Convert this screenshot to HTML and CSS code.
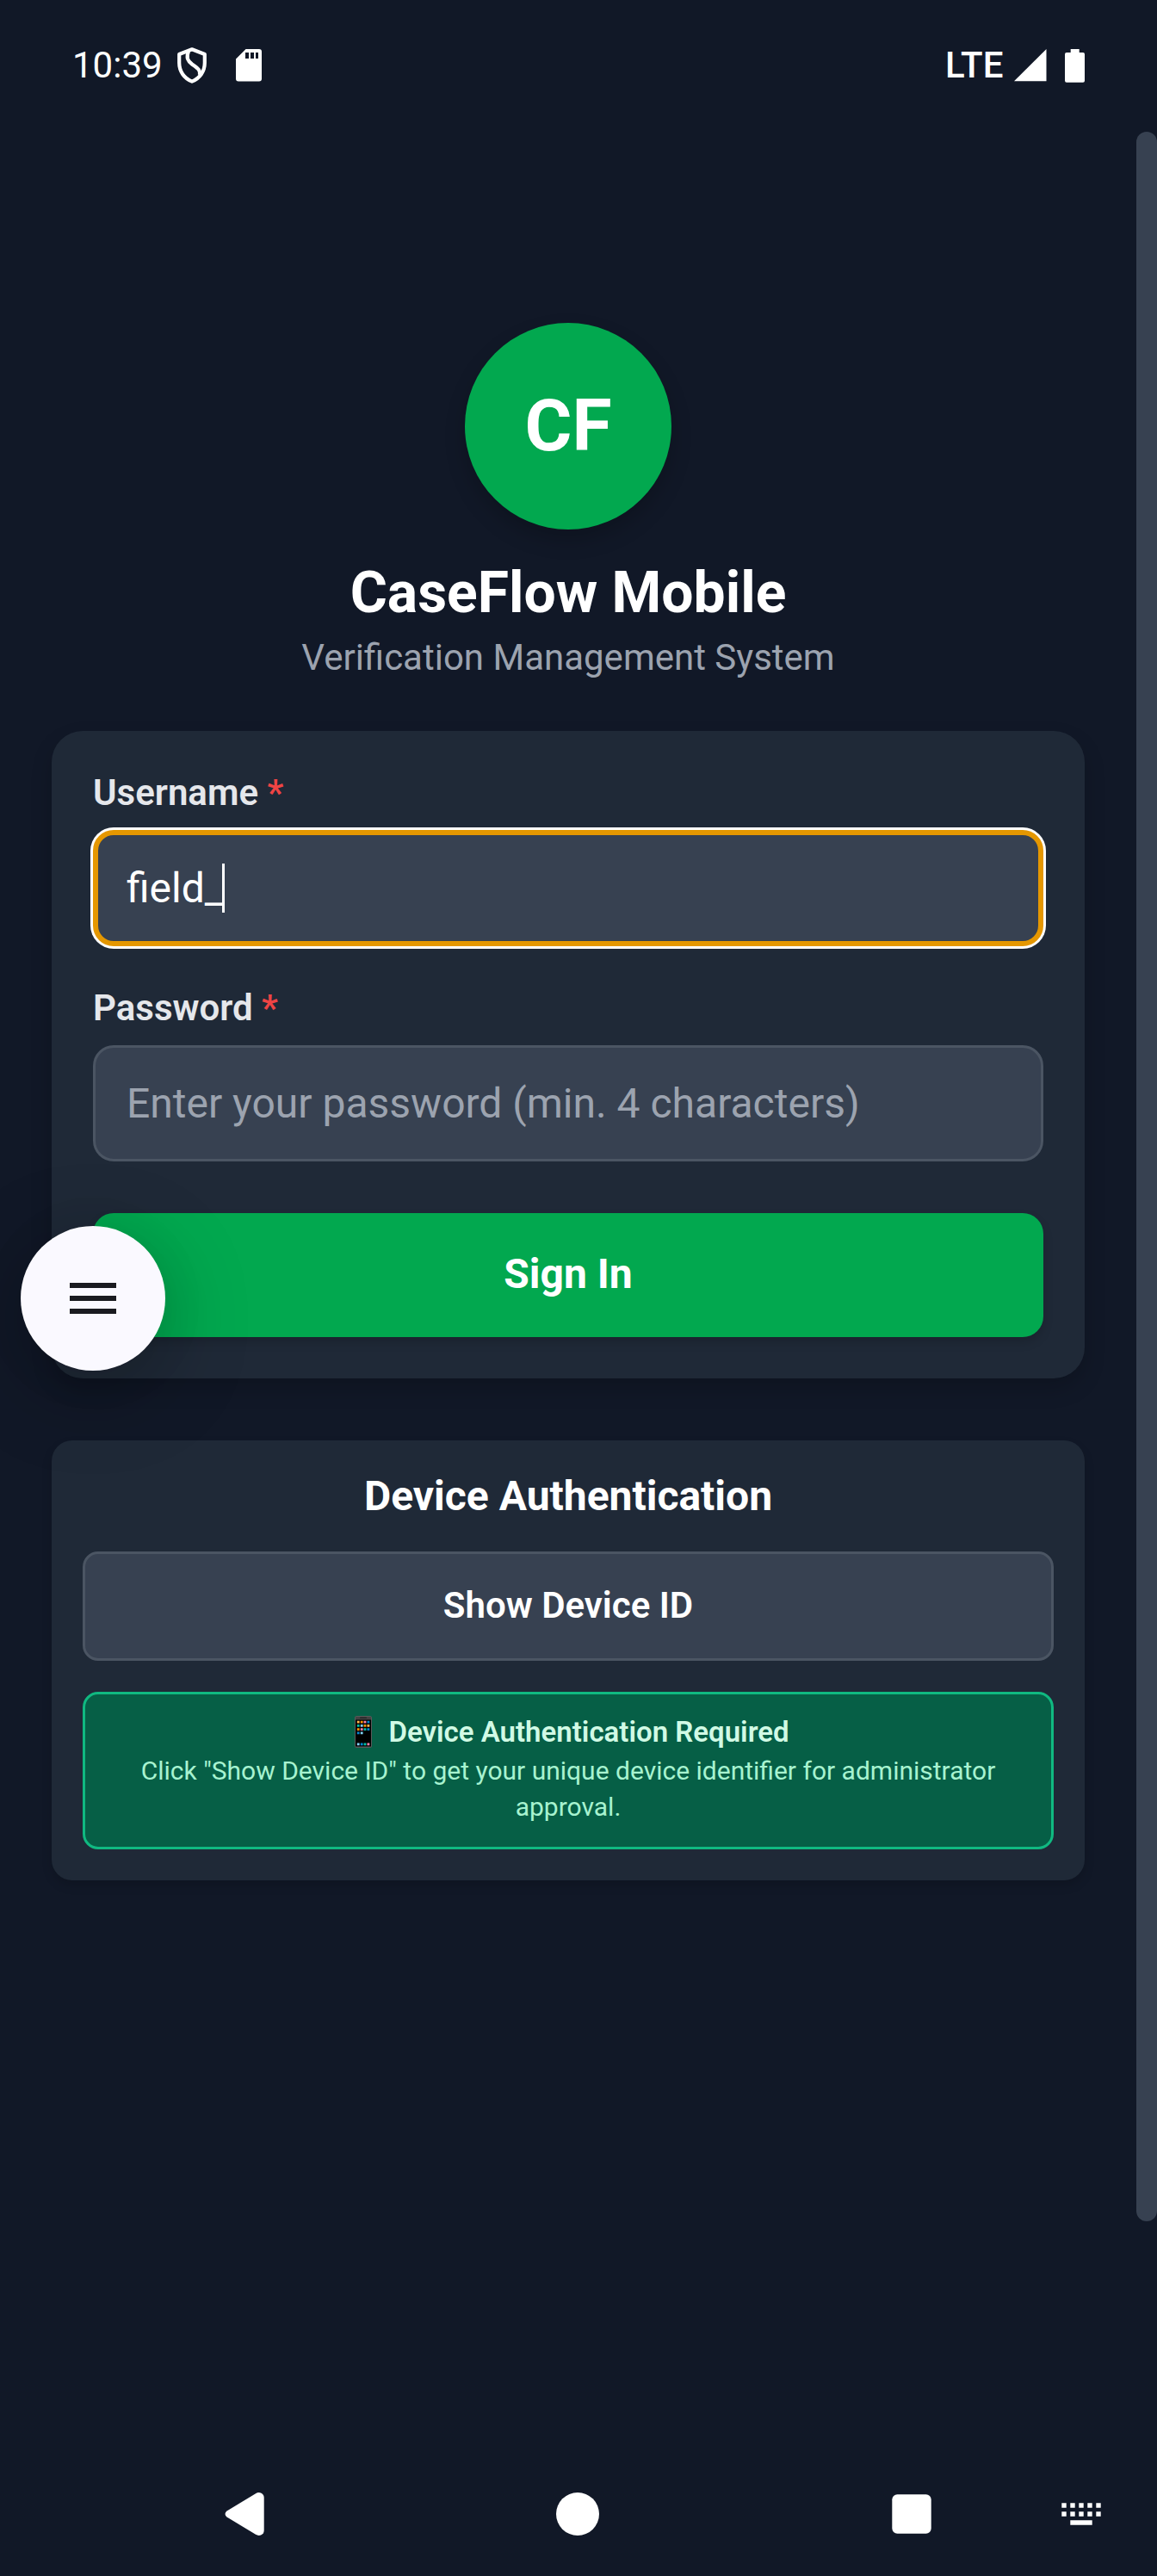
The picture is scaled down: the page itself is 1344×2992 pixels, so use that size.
FILE: index.html
```html
<!DOCTYPE html>
<html lang="en">
<head>
<meta charset="utf-8">
<title>CaseFlow Mobile</title>
<link rel="stylesheet" href="styles.css">
</head>
<body>
<div class="screen">
  <header class="status-bar">
    <div class="status-left">
      <span class="clock">10:39</span>
      <svg class="icon-shield" viewBox="0 0 34 42" width="34" height="42" fill="none" stroke="#fff" stroke-width="4.2" stroke-linejoin="round">
        <path d="M17 2.300 31.800 8V18C31.800 28 26 36 17 39.600 8 36 2.200 28 2.200 18V8Z"/>
        <path d="M13 4.500C10 12 12 15.500 17 19.500 24 24.500 26.800 26 26 32"/>
      </svg>
      <svg class="icon-sd" viewBox="0 0 30 38" width="30" height="38">
        <path fill="#fff" fill-rule="evenodd" d="M11.500 0H27a3 3 0 0 1 3 3V34.500a3 3 0 0 1-3 3H3a3 3 0 0 1-3-3V11.500ZM11 4V11H15V4ZM17 4V11H21V4ZM23 4V11H26V4Z"/>
      </svg>
    </div>
    <div class="status-right">
      <span class="network">LTE</span>
      <svg class="icon-signal" viewBox="0 0 38 38" width="38" height="38"><path fill="#fff" d="M0 37.300 37.500 0V37.300Z"/></svg>
      <svg class="icon-battery" viewBox="0 0 23 39" width="23" height="39"><path fill="#fff" d="M6.700 0H16.700V4H21a2 2 0 0 1 2 2V36.700a2 2 0 0 1-2 2H2a2 2 0 0 1-2-2V6a2 2 0 0 1 2-2H6.700Z"/></svg>
    </div>
  </header>

  <main class="content">
    <section class="brand">
      <div class="logo">CF</div>
      <h1 class="title">CaseFlow Mobile</h1>
      <p class="subtitle">Verification Management System</p>
    </section>

    <form class="card login">
      <div class="label">Username <span class="required">*</span></div>
      <div class="input focused"><span>field_</span><span class="caret"></span></div>
      <div class="label second">Password <span class="required">*</span></div>
      <div class="input placeholder">Enter your password (min. 4 characters)</div>
      <div class="sign-in">Sign In</div>
    </form>

    <section class="card device">
      <h2 class="device-title">Device Authentication</h2>
      <div class="show-id">Show Device ID</div>
      <div class="notice">
        <div class="notice-title">
          <svg class="phone" viewBox="0 0 20 37" width="20" height="37">
            <rect width="20" height="37" rx="2.500" fill="#5a5a5a"/>
            <rect x="1" y="1" width="18" height="4" rx="1" fill="#424242"/>
            <rect x="6" y="1.500" width="8" height="1.300" rx=".6" fill="#222"/>
            <rect x="1" y="4.500" width="18" height="31" fill="#000"/>
            <g fill="#ff9100"><path d="M6.800 5.700h2.800v2.800H6.800ZM10.600 10h2.800v2.800h-2.800ZM2.800 14.200h2.800V17H2.800Z"/></g>
            <g fill="#ffb74d"><path d="M2.800 5.700h2.800v2.800H2.800ZM14.500 10h2.800v2.800h-2.800Z"/></g>
            <g fill="#ff80ab"><path d="M10.600 5.700h2.800v2.800h-2.800ZM6.800 14.200h2.800V17H6.800ZM14.500 31.500h2.800v2.800h-2.800Z"/></g>
            <g fill="#0288d1"><path d="M14.500 5.700h2.800v2.800h-2.800ZM14.500 14.200h2.800V17h-2.800ZM2.800 18.500h2.800v2.800H2.800ZM6.800 31.500h2.800v2.800H6.800Z"/></g>
            <g fill="#00bfa5"><path d="M2.800 10h2.800v2.800H2.800ZM10.600 14.200h2.800V17h-2.800ZM10.600 31.500h2.800v2.800h-2.800Z"/></g>
            <g fill="#81d4fa"><path d="M6.800 10h2.800v2.800H6.800ZM6.800 18.500h2.800v2.800H6.800ZM2.800 31.500h2.800v2.800H2.800Z"/></g>
          </svg>
          <span>Device Authentication Required</span>
        </div>
        <p class="notice-text">Click "Show Device ID" to get your unique device identifier for administrator approval.</p>
      </div>
    </section>
  </main>

  <nav class="nav-bar">
    <svg viewBox="0 0 46 50" width="46" height="50"><path fill="#fff" d="M36 1.200Q39 -.6 42 .5 45.700 2 45.700 6V44Q45.700 48 42 49.500 39 50.600 36 48.800L2.500 28.500Q-1.500 25 2.500 21.500Z"/></svg>
    <svg viewBox="0 0 50 50" width="50" height="50"><circle cx="25" cy="25" r="25" fill="#fff"/></svg>
    <svg viewBox="0 0 46 46" width="46" height="46"><rect x=".3" y=".3" width="45.400" height="45.400" rx="6" fill="#fff"/></svg>
    <svg viewBox="0 0 46 26" width="46" height="26" fill="#fff"><path d="M.3.3h5.400v5.400H.3ZM10.300.3h5.400v5.400h-5.400ZM20.300.3h5.400v5.400h-5.400ZM30.300.3h5.400v5.400h-5.400ZM40.300.3h5.400v5.400h-5.400ZM.3 10.300h5.400v5.400H.3ZM10.300 10.300h5.400v5.400h-5.400ZM20.300 10.300h5.400v5.400h-5.400ZM30.300 10.300h5.400v5.400h-5.400ZM40.300 10.300h5.400v5.400h-5.400ZM10.300 20.300h25.400v5.400H10.300Z"/></svg>
  </nav>

  <div class="scrollbar"></div>
  <div class="fab"><span></span><span></span><span></span></div>
</div>
</body>
</html>
```

FILE: styles.css
```css
* { box-sizing: border-box; margin: 0; padding: 0; }

body {
  background: #111827;
  color: #fff;
  font-family: Roboto, "Liberation Sans", sans-serif;
}

.screen {
  position: relative;
  display: flex;
  flex-direction: column;
  width: 1344px;
  height: 2992px;
  overflow: hidden;
}

.status-bar {
  display: flex;
  justify-content: space-between;
  height: 152px;
  padding: 0 84px;
  font-size: 42px;
  line-height: 152px;
}
.status-left, .status-right { display: flex; align-items: center; }
.icon-shield { margin-left: 17px; }
.icon-sd { margin-left: 34px; }
.network { font-weight: 500; letter-spacing: .4px; }
.icon-signal { margin-left: 12px; }
.icon-battery { margin-left: 21px; }

.content {
  flex: 1;
  width: 1320px;
  padding: 223px 60px 0;
}

.brand {
  display: flex;
  flex-direction: column;
  align-items: center;
  height: 474px;
}
.logo {
  width: 240px;
  height: 240px;
  border-radius: 50%;
  background: #02a84f;
  font-size: 84px;
  font-weight: 700;
  line-height: 240px;
  text-align: center;
  box-shadow: 0 12px 24px rgba(0, 0, 0, .2);
}
.title {
  margin-top: 34px;
  font-size: 66px;
  font-weight: 700;
  line-height: 80px;
}
.subtitle {
  margin-top: 10px;
  color: #9ca3af;
  font-size: 42px;
  line-height: 50px;
}

.card { background: #1f2937; }
.login {
  height: 752px;
  padding: 48px;
  border-radius: 36px;
  box-shadow: 0 12px 24px rgba(0, 0, 0, .18);
}
.label {
  color: #e5e7eb;
  font-size: 42px;
  font-weight: 600;
  line-height: 48px;
}
.label.second { margin-top: 48px; }
.required { color: #ef4444; }
.input {
  display: flex;
  align-items: center;
  height: 135px;
  margin-top: 19px;
  padding: 0 36px;
  border: 3px solid #4b5563;
  border-radius: 24px;
  background: #374151;
  font-size: 48px;
}
.input.focused {
  padding: 0 33px;
  border: 6px solid #e59700;
  box-shadow: 0 0 0 3px #fff;
}
.caret { width: 3px; height: 57px; margin-left: -1px; background: #fff; }
.placeholder { color: #9ca3af; }
.sign-in {
  height: 144px;
  margin-top: 60px;
  border-radius: 24px;
  background: #02a84f;
  font-size: 48px;
  font-weight: 700;
  line-height: 142px;
  text-align: center;
  box-shadow: 0 6px 12px rgba(0, 0, 0, .15);
}

.device {
  height: 511px;
  margin-top: 72px;
  padding: 36px;
  border-radius: 24px;
  text-align: center;
  box-shadow: 0 6px 12px rgba(0, 0, 0, .15);
}
.device-title {
  font-size: 48px;
  font-weight: 700;
  line-height: 57px;
}
.show-id {
  height: 127px;
  margin-top: 36px;
  border: 3px solid #4b5563;
  border-radius: 18px;
  background: #374151;
  font-size: 42px;
  font-weight: 600;
  line-height: 119px;
}
.notice {
  height: 183px;
  margin-top: 36px;
  padding: 22px 30px;
  border: 3px solid #10b981;
  border-radius: 18px;
  background: #065f46;
}
.notice-title {
  display: flex;
  align-items: center;
  justify-content: center;
  gap: 19px;
  height: 42px;
  padding-left: 9px;
  color: #d1fae5;
  font-size: 33px;
  font-weight: 600;
}
.notice-text {
  margin-top: 4px;
  color: #a7f3d0;
  font-size: 30px;
  line-height: 42px;
}

.nav-bar {
  display: grid;
  grid-template-columns: 385px 390px 197px 46px;
  align-items: center;
  height: 144px;
  padding-left: 261px;
}

/* Overlays above the page */
.scrollbar {
  position: absolute;
  top: 153px;
  right: 0;
  width: 24px;
  height: 2427px;
  border-radius: 12px;
  background: #374151;
}
.fab {
  position: absolute;
  top: 1424px;
  left: 24px;
  display: flex;
  flex-direction: column;
  align-items: center;
  justify-content: center;
  gap: 9px;
  width: 168px;
  height: 168px;
  border-radius: 50%;
  background: #faf9ff;
  box-shadow: 0 24px 100px rgba(0, 0, 0, .25), 0 6px 60px rgba(0, 0, 0, .06);
}
.fab span { width: 54px; height: 6px; background: #1a1b20; }
```
